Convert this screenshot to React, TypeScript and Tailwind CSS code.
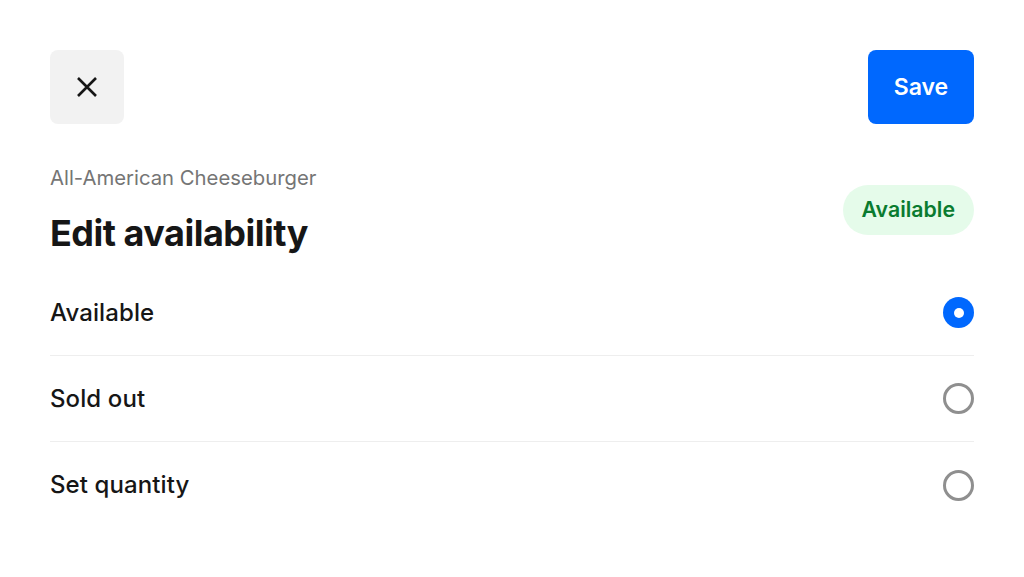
import { useState } from 'react';

const options = [
  { id: 'available', label: 'Available' },
  { id: 'sold_out', label: 'Sold out' },
  { id: 'quantity', label: 'Set quantity' },
];

export default function App() {
  const [selected, setSelected] = useState('available');

  return (
    <div
      className="w-[1024px] h-[577px] bg-white px-[50px] pt-[50px] text-[#161616]"
      style={{ fontFamily: 'Inter, "Liberation Sans", sans-serif' }}
    >
      <div className="flex items-center justify-between">
        <button className="w-[74px] h-[74px] rounded-[8px] bg-[#f2f2f2] flex items-center justify-center">
          <svg width="22" height="22" viewBox="0 0 22 22" fill="none">
            <path d="M2 2L20 20M20 2L2 20" stroke="#161616" strokeWidth="2.6" />
          </svg>
        </button>
        <button className="w-[106px] h-[74px] rounded-[8px] bg-[#0068fe] text-white text-[23px] font-semibold">
          Save
        </button>
      </div>

      <div className="flex items-center justify-between mt-[40px]">
        <div>
          <div className="text-[20.3px] leading-[28px] text-[#757575]">All-American Cheeseburger</div>
          <h1 className="mt-[19px] text-[36px] leading-[44px] font-bold tracking-[-0.5px]">Edit availability</h1>
        </div>
        <span className="h-[50px] px-[19px] rounded-full bg-[#e5fbea] text-[#0a7b30] text-[21.3px] font-semibold flex items-center">
          Available
        </span>
      </div>

      <div className="mt-[15px]">
        {options.map((opt, i) => (
          <button
            key={opt.id}
            onClick={() => setSelected(opt.id)}
            className={`w-full h-[86px] flex items-center justify-between text-left ${
              i < options.length - 1 ? 'border-b border-[#eeeeee]' : ''
            }`}
          >
            <span className="text-[24px] tracking-[0.1px] font-medium">{opt.label}</span>
            {selected === opt.id ? (
              <span className="w-[31px] h-[31px] rounded-full bg-[#0068fe] flex items-center justify-center">
                <span className="w-[10px] h-[10px] rounded-full bg-white" />
              </span>
            ) : (
              <span className="w-[31px] h-[31px] rounded-full border-[3px] border-[#8f8f8f]" />
            )}
          </button>
        ))}
      </div>
    </div>
  );
}
